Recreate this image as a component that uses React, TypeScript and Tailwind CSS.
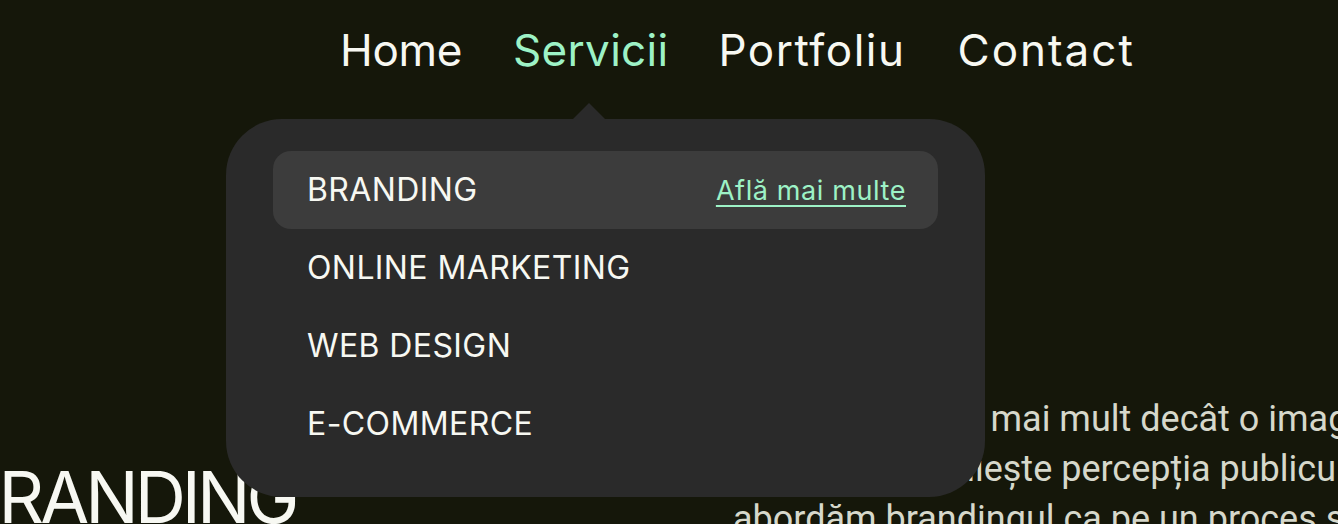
import React from 'react';

const navLinks = [
  { label: 'Home', active: false, cls: 'tracking-[-0.3px]' },
  { label: 'Servicii', active: true, cls: 'ml-[51px] tracking-[0.3px]' },
  { label: 'Portfoliu', active: false, cls: 'ml-[50px] tracking-[1.5px]' },
  { label: 'Contact', active: false, cls: 'ml-[52px] tracking-[2px]' },
];

const services = ['BRANDING', 'ONLINE MARKETING', 'WEB DESIGN', 'E-COMMERCE'];

const intro = [
  'Brandingul este mai mult decât o imagine vizuală.',
  'Acesta construiește percepția publicului, iar noi',
  'abordăm brandingul ca pe un proces strategic.',
];

const display = "font-['Inter',sans-serif]";

const App = () => {
  return (
    <div className="relative h-[524px] w-[1338px] overflow-hidden bg-[#15170a]">
      {/* top nav */}
      <nav className={`flex h-[100px] items-center pl-[340px] ${display}`}>
        {navLinks.map((link) => (
          <a
            key={link.label}
            href="#"
            className={`text-[44px] leading-none ${link.cls} ${link.active ? 'text-[#9df2c6]' : 'text-[#f7f8f2]'}`}
          >
            {link.label}
          </a>
        ))}
      </nav>

      {/* page content behind the dropdown */}
      <section className="grid grid-cols-[733px_1fr] pt-[294px]">
        <h1 className={`-ml-[44px] mt-[68px] whitespace-nowrap text-[71px] leading-none tracking-[-4px] text-[#f7f8f2] ${display}`}>
          BRANDING
        </h1>
        <div className="font-['Roboto',sans-serif] text-[36px] leading-[50px] text-[#d6d8cb]">
          {intro.map((line) => (
            <p key={line} className="whitespace-nowrap">
              {line}
            </p>
          ))}
        </div>
      </section>

      {/* services dropdown */}
      <div className="absolute left-[226px] top-[119px] w-[759px] rounded-[56px] bg-[#2a2a2a] px-[47px] pb-[34px] pt-[32px]">
        <div className="absolute -top-[16px] left-[347px] h-0 w-0 border-x-[16px] border-b-[16px] border-x-transparent border-b-[#2a2a2a]" />
        <ul className={display}>
          {services.map((item, i) => (
            <li
              key={item}
              className={`flex h-[78px] items-center justify-between rounded-[18px] pl-[34px] pr-[32px] ${i === 0 ? 'bg-[#3c3c3c]' : ''}`}
            >
              <span className="text-[32px] leading-none tracking-[0.4px] text-[#f7f8f2]">{item}</span>
              {i === 0 && (
                <a
                  href="#"
                  className="text-[27px] leading-none tracking-[0.6px] text-[#9df2c6] underline decoration-[2px] underline-offset-[5px]"
                >
                  Află mai multe
                </a>
              )}
            </li>
          ))}
        </ul>
      </div>
    </div>
  );
};

export default App;
